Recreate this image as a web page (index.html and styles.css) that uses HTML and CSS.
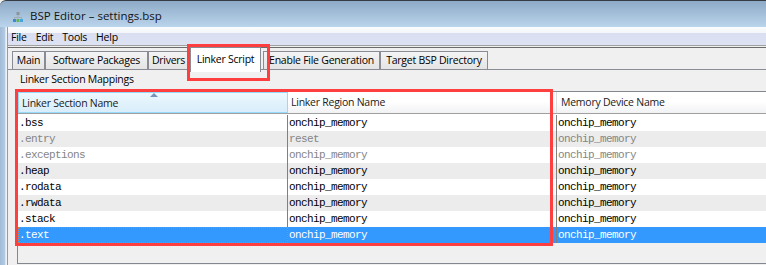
FILE: index.html
```html
<!DOCTYPE html>
<html>
<head>
<meta charset="utf-8">
<title>BSP Editor</title>
<link rel="stylesheet" href="styles.css">
</head>
<body>
<div class="window">
  <div class="titlebar">
    <svg class="app-icon" width="10" height="11" viewBox="0 0 10 11">
      <rect x="3.5" y="0" width="3" height="3" fill="#8c939b"/>
      <path d="M5 3V5M1.5 5.5H8.5M1.5 5V7M5 5V7M8.5 5V7" stroke="#a3acb6" stroke-width="1" fill="none"/>
      <rect x="0" y="7" width="3" height="3" fill="#3f86d4"/>
      <rect x="3.5" y="7" width="3" height="3" fill="#64b653"/>
      <rect x="7" y="7" width="3" height="3" fill="#49a6dd"/>
    </svg>
    <span class="title">BSP Editor – settings.bsp</span>
  </div>
  <div class="frame">
    <div class="frame-left"></div>
    <div class="client">
      <div class="menubar">
        <span class="menu-item">File</span>
        <span class="menu-item">Edit</span>
        <span class="menu-item">Tools</span>
        <span class="menu-item">Help</span>
      </div>
      <div class="tabstrip">
        <div class="tab tab-main">Main</div>
        <div class="tab tab-sw">Software Packages</div>
        <div class="tab tab-drv">Drivers</div>
        <div class="tab tab-lnk selected">Linker Script</div>
        <div class="tab tab-gen">Enable File Generation</div>
        <div class="tab tab-dir">Target BSP Directory</div>
      </div>
      <div class="tabpanel">
        <div class="group-label">Linker Section Mappings</div>
        <div class="scrollpane">
          <div class="thead">
            <div class="th c1 sorted"><span class="sort-arrow"></span>Linker Section Name</div>
            <div class="th c2">Linker Region Name</div>
            <div class="th c3">Memory Device Name</div>
          </div>
          <div class="rows">
            <div class="row"><div class="cell c1">.bss</div><div class="cell c2">onchip_memory</div><div class="cell c3">onchip_memory</div></div>
            <div class="row dim"><div class="cell c1">.entry</div><div class="cell c2">reset</div><div class="cell c3">onchip_memory</div></div>
            <div class="row dim"><div class="cell c1">.exceptions</div><div class="cell c2">onchip_memory</div><div class="cell c3">onchip_memory</div></div>
            <div class="row"><div class="cell c1">.heap</div><div class="cell c2">onchip_memory</div><div class="cell c3">onchip_memory</div></div>
            <div class="row"><div class="cell c1">.rodata</div><div class="cell c2">onchip_memory</div><div class="cell c3">onchip_memory</div></div>
            <div class="row"><div class="cell c1">.rwdata</div><div class="cell c2">onchip_memory</div><div class="cell c3">onchip_memory</div></div>
            <div class="row"><div class="cell c1">.stack</div><div class="cell c2">onchip_memory</div><div class="cell c3">onchip_memory</div></div>
            <div class="row selected"><div class="cell c1 focus">.text</div><div class="cell c2">onchip_memory</div><div class="cell c3">onchip_memory</div></div>
          </div>
        </div>
        <div class="mark table-mark"></div>
      </div>
    </div>
  </div>
</div>
</body>
</html>
```
FILE: styles.css
```css
* { box-sizing: border-box; }
html, body { margin: 0; padding: 0; }
body {
  width: 766px;
  height: 265px;
  overflow: hidden;
  background: #f0f0f0;
  font-family: "Open Sans", "Noto Sans", sans-serif;
  font-size: 10.5px;
  letter-spacing: -0.25px;
  color: #000;
}
.window { height: 265px; display: flex; flex-direction: column; }

.titlebar {
  flex: none;
  height: 27px;
  border-top: 1px solid #353c44;
  border-top-left-radius: 6px;
  background: linear-gradient(#8eaac6, #bad4ec);
  display: flex;
  align-items: flex-start;
  padding-left: 13px;
}
.app-icon { flex: none; margin-top: 11px; }
.title {
  margin-left: 7px;
  margin-top: 7px;
  font-size: 11.5px;
  line-height: 16px;
  letter-spacing: 0;
  color: #141414;
}

.frame { flex: 1; display: flex; min-height: 0; }
.frame-left {
  flex: none;
  width: 8px;
  background: linear-gradient(to right, #a2bbd6 0, #b3cbe4 5px, #d9e4f0 5px, #d9e4f0 6px, #eef1f5 6px, #eef1f5 7px, #8f9dac 7px, #8f9dac 8px);
}
.client { flex: 1; display: flex; flex-direction: column; min-width: 0; }

.menubar {
  flex: none;
  height: 19px;
  border-bottom: 1px solid #a0a0a0;
  background: linear-gradient(#fbfcfe 0, #f4f6fb 6px, #d9def1 6px, #dde2f3 100%);
  display: flex;
  align-items: center;
  gap: 9px;
  padding-left: 3px;
  padding-top: 1px;
}
.menu-item { line-height: 14px; }

.tabstrip {
  flex: none;
  margin-top: 1px;
  height: 23px;
  border-top: 1px solid #6b6b6b;
  border-bottom: 1px solid #898c95;
  display: flex;
  align-items: flex-start;
  padding-left: 4px;
}
.tab {
  flex: none;
  margin-top: 3px;
  height: 18px;
  border: 1px solid #898c95;
  border-bottom: none;
  background: linear-gradient(#f4f4f4, #e4e4e4);
  text-align: center;
  line-height: 17px;
  white-space: nowrap;
}
.tab + .tab { border-left: none; }
.tab-main { width: 33px; }
.tab-sw { width: 103px; border-left: 1px solid #898c95 !important; }
.tab-drv { width: 41px; border-left: 1px solid #898c95 !important; }
.tab-lnk { width: 71px; }
.tab-gen { width: 117px; border-left: 1px solid #898c95 !important; }
.tab-dir { width: 108px; border-left: 1px solid #898c95 !important; }
.tab.selected {
  position: relative;
  z-index: 1;
  margin-top: -1px;
  margin-left: 1px;
  margin-right: 2px;
  height: 25px;
  border-left: 1px solid #898c95;
  background: #fff;
  line-height: 22px;
}
.tab.selected::after {
  content: "";
  position: absolute;
  left: -4px;
  top: -4px;
  width: 77px;
  height: 31px;
  border: 3px solid #ff3f3f;
}

.tabpanel { flex: 1; position: relative; padding-left: 12px; min-height: 0; }
.group-label { margin-top: 2px; line-height: 14px; }

.scrollpane {
  margin-top: 5px;
  margin-left: -3px;
  height: 173px;
  border: 1px solid #828790;
  border-right: none;
  background: #f0f0f0;
  overflow: hidden;
}
.thead {
  display: flex;
  height: 22px;
  border-bottom: 1px solid #a0a0a0;
  background: linear-gradient(#ffffff 0, #ffffff 45%, #f1f2f4 100%);
}
.th {
  flex: none;
  height: 21px;
  line-height: 20px;
  padding-left: 3px;
  white-space: nowrap;
  color: #1a1a1a;
}
.th.c1 { width: 270px; }
.th.c2 { width: 269px; border-right: 1px solid #dcdddf; }
.th.c3 { flex: 1; padding-left: 4px; }
.th.sorted {
  position: relative;
  border: 1px solid #96d9f9;
  background: linear-gradient(#eef8fe 0, #e3f3fc 45%, #d8eefa 100%);
}
.sort-arrow {
  position: absolute;
  top: 0;
  left: 131px;
  width: 0;
  height: 0;
  border-left: 4px solid transparent;
  border-right: 4px solid transparent;
  border-bottom: 4px solid #7496bb;
}

.rows { border-top: 1px solid #fff; }
.row {
  display: flex;
  height: 16px;
  line-height: 16px;
  background: #fff;
  font-family: "Liberation Mono", "DejaVu Sans Mono", monospace;
  font-size: 11px;
  letter-spacing: -0.6px;
  color: #000;
}
.row:nth-child(even) { background: #ececec; }
.row.dim { color: #858585; }
.row.selected { background: #3399ff; color: #fff; }
.cell { flex: none; padding-left: 1px; white-space: nowrap; overflow: hidden; }
.cell.c1 { width: 270px; border-right: 1px solid #808080; }
.cell.c2 { width: 269px; border-right: 1px solid #808080; }
.cell.c3 { flex: 1; }
.cell.focus { outline: 1px dotted #c8874a; outline-offset: -1px; }

.mark { position: absolute; border: 3px solid #ff3f3f; pointer-events: none; }
.table-mark { left: 7px; top: 19px; width: 538px; height: 157px; }
```
